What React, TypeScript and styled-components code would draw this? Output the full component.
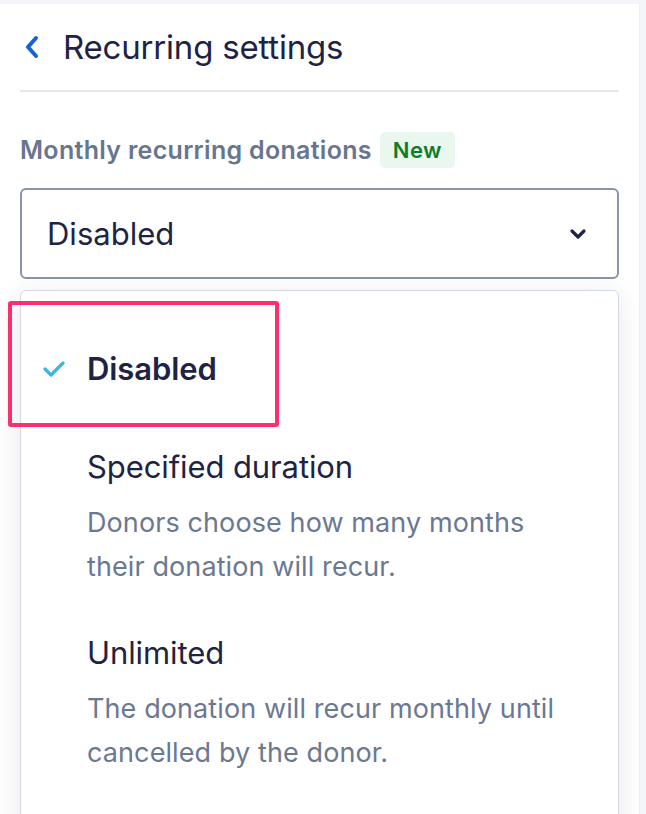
import React from "react";
import styled, { createGlobalStyle } from "styled-components";

const Global = createGlobalStyle`
  html, body { margin: 0; padding: 0; }
  body {
    background: #f4f5f8;
    font-family: Inter, "Noto Sans", "Liberation Sans", sans-serif;
    -webkit-font-smoothing: antialiased;
    overflow: hidden;
  }
`;

const Page = styled.div`
  display: flex;
  padding-top: 4px;
  height: 810px;
  overflow: hidden;
`;

const Panel = styled.div`
  width: 640px;
  background: #ffffff;
  border-right: 1px solid #eceef2;
  padding: 0 20px 0 20px;
  box-sizing: border-box;
  overflow: hidden;
`;

const Header = styled.div`
  display: flex;
  align-items: center;
  gap: 23px;
  height: 86px;
  border-bottom: 2px solid #e6e8ec;
  padding-left: 4px;
`;

const Title = styled.h1`
  margin: 0;
  font-size: 33px;
  font-weight: 400;
  color: #1e2344;
  letter-spacing: -0.2px;
`;

const LabelRow = styled.div`
  display: flex;
  align-items: center;
  gap: 8px;
  margin-top: 40px;
`;

const Label = styled.span`
  font-size: 25px;
  font-weight: 600;
  color: #68758f;
  letter-spacing: 0.3px;
`;

const Badge = styled.span`
  display: inline-flex;
  align-items: center;
  height: 36px;
  padding: 0 13px;
  border-radius: 5px;
  background: #eaf7ee;
  color: #137a2a;
  font-size: 22px;
  font-weight: 600;
  letter-spacing: 0.4px;
`;

const Select = styled.div`
  margin-top: 20px;
  height: 91px;
  box-sizing: border-box;
  border: 2px solid #8a95aa;
  border-radius: 6px;
  display: flex;
  align-items: center;
  justify-content: space-between;
  padding: 0 30px 0 25px;
  font-size: 31px;
  color: #1e2344;
`;

const Menu = styled.div`
  position: relative;
  margin-top: 11px;
  border: 1px solid #d3d8e2;
  border-radius: 6px;
  padding-top: 36px;
  box-shadow: 0 4px 28px rgba(30, 40, 70, 0.1);
  height: 600px;
`;

const Option = styled.div<{ $hasDesc: boolean }>`
  display: flex;
  align-items: flex-start;
  padding: 22px 24px ${(p) => (p.$hasDesc ? "22px" : "36px")} 22px;
`;

const CheckSlot = styled.div`
  width: 44px;
  height: 40px;
  flex: none;
  display: flex;
  align-items: center;
`;

const OptionBody = styled.div`
  display: flex;
  flex-direction: column;
  gap: 14px;
`;

const OptionTitle = styled.div<{ $selected?: boolean }>`
  font-size: 31px;
  line-height: 40px;
  font-weight: ${(p) => (p.$selected ? 600 : 400)};
  color: #1e2344;
  letter-spacing: -0.1px;
`;

const OptionDesc = styled.div`
  font-size: 27px;
  line-height: 44px;
  color: #6b7892;
  max-width: 490px;
  letter-spacing: 0.1px;
`;

const Highlight = styled.div`
  position: absolute;
  left: -13px;
  top: 10px;
  width: 271px;
  height: 126px;
  box-sizing: border-box;
  border: 4px solid #ff2f6d;
  border-radius: 3px;
  pointer-events: none;
`;

const BackIcon = () => (
  <svg width="16" height="24" viewBox="0 0 16 24" fill="none">
    <polyline
      points="12,3 4,12 12,21"
      stroke="#1660d8"
      strokeWidth="4"
      strokeLinecap="round"
      strokeLinejoin="round"
    />
  </svg>
);

const ChevronDown = () => (
  <svg width="18" height="12" viewBox="0 0 18 12" fill="none">
    <polyline
      points="3,3 9,9 15,3"
      stroke="#1e2344"
      strokeWidth="3.2"
      strokeLinecap="round"
      strokeLinejoin="round"
    />
  </svg>
);

const Check = () => (
  <svg width="22" height="16" viewBox="0 0 22 16" fill="none">
    <polyline
      points="2,8 8,14 20,2"
      stroke="#3cb6e6"
      strokeWidth="3.2"
      strokeLinecap="round"
      strokeLinejoin="round"
    />
  </svg>
);

const options = [
  { title: "Disabled", desc: "", selected: true },
  {
    title: "Specified duration",
    desc: "Donors choose how many months their donation will recur.",
    selected: false,
  },
  {
    title: "Unlimited",
    desc: "The donation will recur monthly until cancelled by the donor.",
    selected: false,
  },
];

export default function App() {
  return (
    <>
      <Global />
      <Page>
        <Panel>
          <Header>
            <BackIcon />
            <Title>Recurring settings</Title>
          </Header>
          <LabelRow>
            <Label>Monthly recurring donations</Label>
            <Badge>New</Badge>
          </LabelRow>
          <Select>
            <span>Disabled</span>
            <ChevronDown />
          </Select>
          <Menu>
            {options.map((o) => (
              <Option key={o.title} $hasDesc={!!o.desc}>
                <CheckSlot>{o.selected && <Check />}</CheckSlot>
                <OptionBody>
                  <OptionTitle $selected={o.selected}>{o.title}</OptionTitle>
                  {o.desc && <OptionDesc>{o.desc}</OptionDesc>}
                </OptionBody>
              </Option>
            ))}
            <Highlight />
          </Menu>
        </Panel>
      </Page>
    </>
  );
}
